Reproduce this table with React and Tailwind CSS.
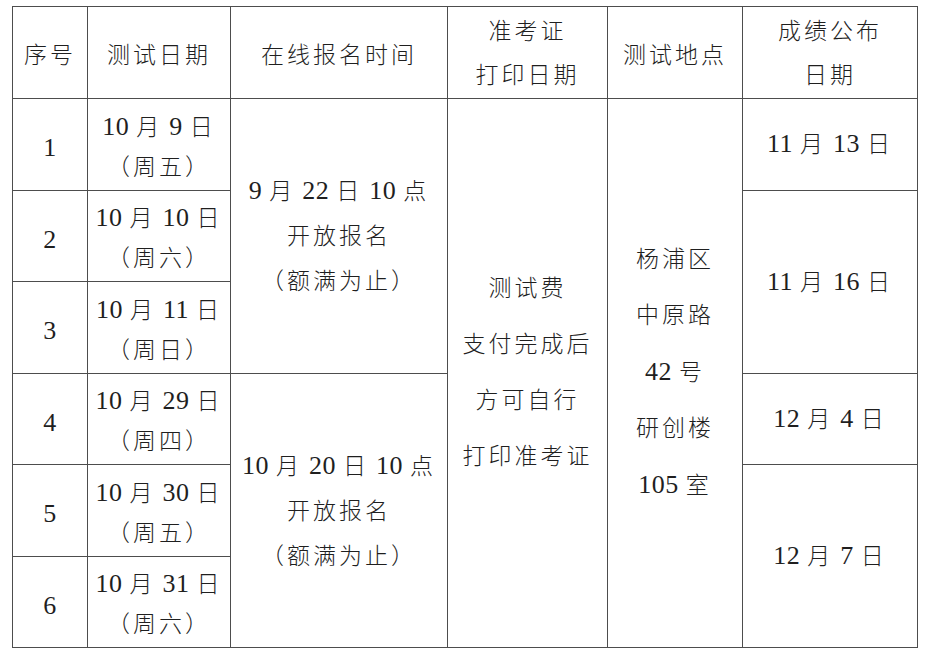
const font = { fontFamily: '"Liberation Serif", "Noto Sans CJK SC", serif' };

const dates = [
  { no: '1', date: '10 月 9 日', week: '（周五）', h: 'h-[92px]' },
  { no: '2', date: '10 月 10 日', week: '（周六）', h: 'h-[91px]' },
  { no: '3', date: '10 月 11 日', week: '（周日）', h: 'h-[92px]' },
  { no: '4', date: '10 月 29 日', week: '（周四）', h: 'h-[91px]' },
  { no: '5', date: '10 月 30 日', week: '（周五）', h: 'h-[92px]' },
  { no: '6', date: '10 月 31 日', week: '（周六）', h: 'h-[91px]' },
];

const cell = 'border border-[#4d4d4d] text-center align-middle p-0';

// digits and spaces are set in the latin serif, a bit larger, like the source doc
function T({ children }) {
  const parts = children.match(/[0-9 ]+|[^0-9 ]+/g) || [];
  return parts.map((p, i) =>
    /[0-9 ]/.test(p[0]) ? (
      <span key={i} className="text-[26px] tracking-[0.5px]">{p}</span>
    ) : (
      <span key={i} className="font-light">{p}</span>
    )
  );
}

function Lines({ items, leading }) {
  return (
    <div className={`flex flex-col items-center ${leading}`}>
      {items.map((t, i) => (
        <div key={i} className="whitespace-nowrap"><T>{t}</T></div>
      ))}
    </div>
  );
}

export default function App() {
  return (
    <div className="w-[925px] h-[651px] bg-white pl-[12px] pt-[6px] text-[#1f1f1f] overflow-hidden" style={font}>
      <table className="table-fixed border-collapse w-[905px] text-[23px] tracking-[3px]">
        <colgroup>
          <col className="w-[75px]" />
          <col className="w-[143px]" />
          <col className="w-[217px]" />
          <col className="w-[160px]" />
          <col className="w-[135px]" />
          <col className="w-[175px]" />
        </colgroup>
        <thead>
          <tr className="h-[92px]">
            <th className={`${cell} font-normal pt-[6px] leading-[30px]`}><T>序号</T></th>
            <th className={`${cell} font-normal pt-[6px] leading-[30px]`}><T>测试日期</T></th>
            <th className={`${cell} font-normal pt-[6px] leading-[30px]`}><T>在线报名时间</T></th>
            <th className={`${cell} font-normal pt-[2px]`}>
              <Lines items={['准考证', '打印日期']} leading="leading-[44px]" />
            </th>
            <th className={`${cell} font-normal pt-[6px] leading-[30px]`}><T>测试地点</T></th>
            <th className={`${cell} font-normal pt-[2px]`}>
              <Lines items={['成绩公布', '日期']} leading="leading-[44px]" />
            </th>
          </tr>
        </thead>
        <tbody>
          {dates.map((d, i) => (
            <tr key={d.no} className={d.h}>
              <td className={`${cell} tracking-normal pt-[8px] leading-[30px]`}><T>{d.no}</T></td>
              <td className={`${cell} pt-[5px]`}>
                <Lines items={[d.date, d.week]} leading="leading-[40px]" />
              </td>
              {i === 0 && (
                <td rowSpan={3} className={cell}>
                  <Lines items={['9 月 22 日 10 点', '开放报名', '（额满为止）']} leading="leading-[45px]" />
                </td>
              )}
              {i === 3 && (
                <td rowSpan={3} className={cell}>
                  <Lines items={['10 月 20 日 10 点', '开放报名', '（额满为止）']} leading="leading-[45px]" />
                </td>
              )}
              {i === 0 && (
                <td rowSpan={6} className={cell}>
                  <Lines items={['测试费', '支付完成后', '方可自行', '打印准考证']} leading="leading-[56px]" />
                </td>
              )}
              {i === 0 && (
                <td rowSpan={6} className={cell}>
                  <Lines items={['杨浦区', '中原路', '42 号', '研创楼', '105 室']} leading="leading-[56px]" />
                </td>
              )}
              {i === 0 && <td className={`${cell} leading-[30px]`}><T>11 月 13 日</T></td>}
              {i === 1 && <td rowSpan={2} className={`${cell} leading-[30px]`}><T>11 月 16 日</T></td>}
              {i === 3 && <td className={`${cell} leading-[30px]`}><T>12 月 4 日</T></td>}
              {i === 4 && <td rowSpan={2} className={`${cell} leading-[30px]`}><T>12 月 7 日</T></td>}
            </tr>
          ))}
        </tbody>
      </table>
    </div>
  );
}
